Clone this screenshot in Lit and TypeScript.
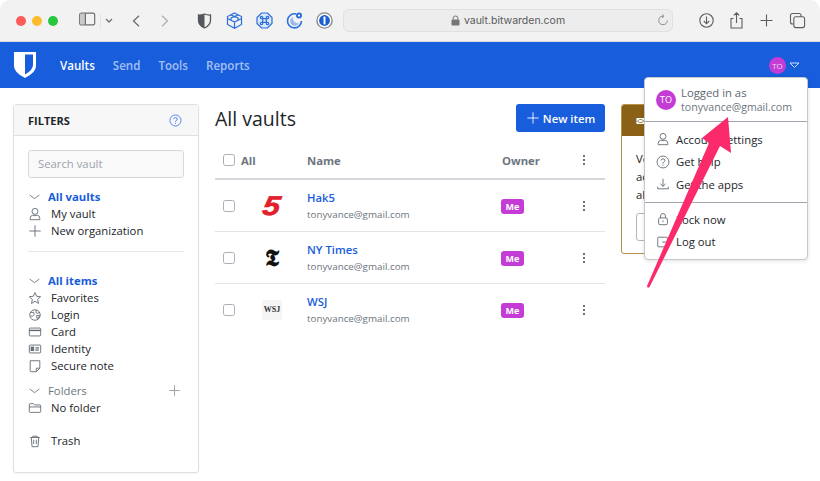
import { LitElement, html, css, svg } from "lit";
import { customElement } from "lit/decorators.js";

const ic = (body: unknown, size = 16, vb = "0 0 16 16") =>
  html`<svg class="ic" width=${size} height=${size} viewBox=${vb}>${body}</svg>`;

const icons: Record<string, unknown> = {
  chev: svg`<path d="M2 5.5 L8 10 L14 5.5"/>`,
  user: svg`<circle cx="8" cy="5" r="3.400"/><path d="M2.500 14.500 V13 Q2.500 9.800 5.500 9.300 Q8 10.600 10.500 9.300 Q13.500 9.800 13.500 13 V14.500 Z"/>`,
  plus: svg`<path d="M8 1.500 V14.500 M1.500 8 H14.500"/>`,
  star: svg`<path d="M8 1.800 L9.900 6 L14.400 6.500 L11 9.600 L12 14.200 L8 11.800 L4 14.200 L5 9.600 L1.600 6.500 L6.100 6 Z"/>`,
  globe: svg`<circle cx="8" cy="8" r="6"/><path d="M3 5 H6.500 L7 7.500 L5 9.500 L3 9 M9.500 2.500 L9 5 L11 6 L13.500 5 M10 8.500 H13 L12 12 L10 11.500 Z"/>`,
  card: svg`<rect x="1.500" y="3.500" width="13" height="9" rx="1"/><path d="M1.500 6.200 H14.500" stroke-width="1.600"/>`,
  id: svg`<rect x="1.500" y="3.500" width="13" height="9" rx="1"/><rect x="3.500" y="5.800" width="3" height="4" fill="#6d757e"/><path d="M8.500 6.500 H12.500 M8.500 8 H12.500 M8.500 9.500 H12"/>`,
  note: svg`<path d="M2.500 2 H13.500 V10.500 L9.500 14.500 H3.500 Q2.500 14.500 2.500 13.500 Z M13.500 10.500 H9.500 V14.500"/>`,
  folder: svg`<path d="M1.500 4.500 Q1.500 3 2.500 3 H6 L7.500 4.500 H13.500 Q14.500 4.500 14.500 5.500 V12 Q14.500 13 13.500 13 H2.500 Q1.500 13 1.500 12 Z M1.500 6.800 H14.500"/>`,
  trash: svg`<path d="M2.500 4 H13.500 M5.500 4 V2.500 H10.500 V4 M3.800 4 L4.600 14.500 H11.400 L12.200 4 M6.500 6.500 V11.500 M9.500 6.500 V11.500"/>`,
  help: svg`<circle cx="8" cy="8" r="6.800"/><path d="M5.800 6.300 Q6 4.400 8 4.400 Q10.200 4.400 10.200 6.200 Q10.200 7.400 8.800 8 Q8 8.400 8 9.800"/><path d="M8 11 V12.200"/>`,
  download: svg`<path d="M8 2 V10.500 M5 7.800 L8 10.700 L11 7.800 M2 11 V13.500 H14 V11"/>`,
  lock: svg`<rect x="3" y="6.800" width="10" height="7.700" rx="1.500"/><path d="M5.200 6.800 V4.500 Q5.200 1.800 8 1.800 Q10.800 1.800 10.800 4.500 V6.800 M8 9.600 V11.600"/>`,
  logout: svg`<path d="M13 5 V3.200 Q13 2.500 12.300 2.500 H2.700 Q2 2.500 2 3.200 V12.800 Q2 13.500 2.700 13.500 H12.300 Q13 13.500 13 12.800 V11 M7 8 H15 M12.500 5.800 L15 8 L12.500 10.200"/>`,
};

const tb: Record<string, unknown> = {
  shield: svg`<path d="M8.500 2 Q11.500 3.200 14.500 3 V8.500 Q14.500 13 8.500 16 Q2.500 13 2.500 8.500 V3 Q5.500 3.200 8.500 2 Z" fill="none" stroke="#55585c" stroke-width="1.300"/><path d="M8.500 2 Q5.500 3.200 2.500 3 V8.500 Q2.500 13 8.500 16 Z" fill="#55585c"/>`,
  cube: svg`<g fill="none" stroke="#2a6fdb" stroke-width="1.200"><path d="M8.500 1 L15.500 4.500 V12.500 L8.500 16.200 L1.500 12.500 V4.500 Z M1.500 6.500 L8.500 10 L15.500 6.500 M8.500 10 V16.200 M5 3 L12 6 V8.500 M12 3 L5 6 V8.500"/></g>`,
  cmd: svg`<path d="M5.500 1 H11.500 L16 5.500 V11.500 L11.500 16 H5.500 L1 11.500 V5.500 Z" fill="#dbe6f8" stroke="#2a6fdb" stroke-width="1.200"/><path d="M6.700 6.700 H10.300 V10.300 H6.700 Z M6.700 6.700 H5.500 A1.200 1.200 0 1 1 6.700 5.500 Z M10.300 6.700 V5.500 A1.200 1.200 0 1 1 11.500 6.700 Z M10.300 10.300 H11.500 A1.200 1.200 0 1 1 10.300 11.500 Z M6.700 10.300 V11.500 A1.200 1.200 0 1 1 5.500 10.300 Z" fill="none" stroke="#2a6fdb" stroke-width="1.200"/>`,
  moon: svg`<path d="M10 2 A7 7 0 1 0 15.500 9" fill="none" stroke="#2a6fdb" stroke-width="1.600"/><path d="M7 5 A4.600 4.600 0 1 0 13 11 A5 5 0 0 1 7 5 Z" fill="#9db9ec"/><circle cx="13" cy="3.600" r="3" fill="#2a6fdb"/><circle cx="13" cy="3.600" r="1.100" fill="#fff"/>`,
  one: svg`<circle cx="8.500" cy="8.500" r="7.600" fill="#fff" stroke="#8a8a8a" stroke-width="1.400"/><circle cx="8.500" cy="8.500" r="5.400" fill="#1a5fd0"/><rect x="7.500" y="4.600" width="2" height="7.800" rx=".6" fill="#fff"/>`,
  sidebar: svg`<rect x=".7" y="1.200" width="15" height="11.600" rx="1.600" fill="none" stroke="#6e6e6e" stroke-width="1.200"/><rect x="1.200" y="1.700" width="5.200" height="10.600" fill="#c9c9c9"/><path d="M6.400 1.200 V12.800" stroke="#6e6e6e" stroke-width="1.200"/>`,
  dl: svg`<circle cx="8.500" cy="8.500" r="6.700" fill="none" stroke="#5e5e5e" stroke-width="1.100"/><path d="M8.500 4.500 V11.800 M5.800 9 L8.500 11.800 L11.200 9" fill="none" stroke="#5e5e5e" stroke-width="1.100"/>`,
  share: svg`<path d="M5.500 6.500 H3 V16 H14 V6.500 H11.500 M8.500 11 V.8 M5.800 3.400 L8.500 .8 L11.200 3.400" fill="none" stroke="#5e5e5e" stroke-width="1.100"/>`,
  add: svg`<path d="M8.500 2.500 V14.500 M2.500 8.500 H14.500" fill="none" stroke="#5e5e5e" stroke-width="1.100"/>`,
  tabs: svg`<rect x="1.500" y="1.500" width="10.500" height="10.500" rx="2" fill="none" stroke="#5e5e5e" stroke-width="1.100"/><rect x="4.800" y="4.800" width="10.800" height="10.800" rx="2" fill="#f2f2f2" stroke="#5e5e5e" stroke-width="1.100"/>`,
};

const tbi = (n: string) => html`<svg width="17" height="17" viewBox="0 0 17 17">${tb[n]}</svg>`;

const dots = html`<svg class="dots" width="4" height="12" viewBox="0 0 4 12"><circle cx="2" cy="2" r="1"/><circle cx="2" cy="6" r="1"/><circle cx="2" cy="10" r="1"/></svg>`;

const row = (name: string, logo: unknown) => html`
  <div class="tr">
    <span class="cb"></span>
    <span class="logo">${logo}</span>
    <div class="nm"><a>${name}</a><small>tonyvance@gmail.com</small></div>
    <span class="own"><b class="me">Me</b></span>
    <span class="kebab">${dots}</span>
  </div>`;

@customElement("app-root")
export class AppRoot extends LitElement {
  static styles = css`
    :host { display: block; width: 820px; height: 481px; position: relative; overflow: hidden; background: #fff; font-family: "Open Sans", sans-serif; font-size: 11.300px; color: #212529; }
    .ic { fill: none; stroke: #5f6770; stroke-width: 1; display: block; flex: none; }
    .chrome { height: 41px; background: #f2f2f2; border-bottom: 1px solid #dcdcdc; display: flex; align-items: center; border-radius: 10px 10px 0 0; }
    .lights { display: flex; gap: 6px; margin-left: 16px; width: 63px; }
    .lights i { width: 10px; height: 10px; border-radius: 50%; }
    .r { background: #fc5b57; } .y { background: #fdbb2e; } .g { background: #29c73f; }
    .side { display: flex; align-items: center; width: 46px; }
    .caret { display: flex; margin-left: 4px; padding-left: 4px; border-left: 1px solid #e3e3e3; height: 14px; align-items: center; }
    .caret svg, .arrows svg { fill: none; stroke: #6e6e6e; stroke-width: 1.300; display: block; }
    .arrows { display: flex; gap: 21px; width: 57px; padding-left: 9px; margin-left: -2px; }
    .arrows svg.off { stroke: #b0b0b0; }
    .exts { display: flex; width: 155px; }
    .exts span { width: 30px; display: flex; justify-content: center; }
    .url { width: 328px; height: 21px; background: #ededed; border: 1px solid #e0e0e0; border-radius: 6px; display: flex; align-items: center; position: relative; font: 10.500px Inter, "Liberation Sans", sans-serif; color: #5a5a5a; justify-content: center; gap: 4px; margin-left: -1px; }
    .url svg { display: block; }
    .reload { position: absolute; right: 3px; top: 4px; }
    .tools { display: flex; margin-left: 18px; }
    .tools span { width: 30.300px; display: flex; justify-content: center; }
    .nav { height: 46px; background: #175ddc; display: flex; align-items: center; padding: 0 20px 0 14px; }
    .nav .links { display: flex; gap: 18px; margin-left: 24px; font-size: 11.600px; font-weight: 600; color: rgba(255,255,255,.62); }
    .nav .on { color: #fff; }
    .me-btn { margin-left: auto; display: flex; align-items: center; gap: 3px; }
    .av { background: #c43cd6; border-radius: 50%; color: #f0d6f5; display: flex; align-items: center; justify-content: center; }
    .av.s { width: 17px; height: 17px; font-size: 8px; }
    .av.l { width: 20px; height: 20px; font-size: 9px; color: #fff; }
    .main { display: flex; align-items: flex-start; padding: 16px 0 0 13px; }
    .filters { width: 184px; height: 367px; border: 1px solid #dde1e6; border-radius: 3px; flex: none; display: flex; flex-direction: column; box-shadow: 0 1px 2px rgba(0,0,0,.05); }
    .fh { height: 30px; background: #f7f7f7; border-bottom: 1px solid #dde1e6; display: flex; align-items: center; justify-content: space-between; padding: 0 16px 0 14px; font-size: 11px; font-weight: 700; flex: none; }
    .fh .ic { stroke: #4f86ea; stroke-width: 1.200; width: 13px; height: 13px; }
    .fb { padding: 14px 14px 0; display: flex; flex-direction: column; }
    .search { height: 26px; background: #f9f9f9; border: 1px solid #d5d9de; border-radius: 3px; padding-left: 9px; display: flex; align-items: center; color: #9ca3ab; margin-bottom: 10px; line-height: 24px; }
    .li { height: 17px; line-height: 17px; display: flex; align-items: center; white-space: nowrap; }
    .li .ic { margin-right: 9px; width: 14px; height: 14px; }
    .li.h .ic { margin-right: 7px; width: 13px; }
    .li.h { font-weight: 700; color: #175ddc; }
    .li.f { color: #6d757e; }
    .li.f .ic { margin-right: 7px; width: 13px; }
    .li .pl { margin: 0 3px 0 auto; display: block; }
    .li .pl .ic { stroke: #8b929a; margin: 0; width: 13px; height: 13px; }
    .fb hr { border: 0; border-top: 1px solid #e4e6e9; margin: 12px 0 20px; width: 100%; }
    .gap1 { height: 8px; flex: none; } .gap2 { height: 16px; flex: none; }
    .content { width: 390px; margin-left: 16px; flex: none; }
    .top { display: flex; justify-content: space-between; align-items: center; height: 28px; margin-bottom: 10px; }
    h1 { font-size: 19.500px; font-weight: 400; margin: 0; }
    .new { height: 28px; width: 89px; background: #175ddc; border-radius: 3px; color: #fff; font-weight: 600; display: flex; align-items: center; justify-content: center; gap: 3px; }
    .new .ic { stroke: #fff; width: 14px; height: 14px; }
    .th, .tr { display: grid; align-items: center; }
    .th { height: 36px; grid-template-columns: 92px 195px 70px 33px; border-bottom: 2px solid #d5d9de; font-weight: 700; color: #6d757e; }
    .all { display: flex; align-items: center; gap: 6px; padding-left: 8px; }
    .cb { display: block; width: 10px; height: 10px; border: 1px solid #a9b0b8; border-radius: 2.500px; margin-left: 8px; flex: none; }
    .all .cb { margin-left: 0; }
    .kebab { display: flex; justify-content: flex-end; padding-right: 19px; }
    .dots { fill: #3b4148; display: block; }
    .tr { height: 51px; border-bottom: 1px solid #e1e4e8; grid-template-columns: 40px 52px 195px 70px 33px; }
    .tr:last-child { border-bottom: 0; }
    .logo { display: flex; justify-content: center; align-items: center; margin-left: -18px; }
    .five { font: italic 900 27px/1 "Liberation Sans", sans-serif; color: #e3202b; -webkit-text-stroke: .6px #e3202b; display: block; transform: translateY(1px) scaleX(1.150) skewX(-8deg); }
    .nyt { font: 700 23px/1 "DejaVu Serif", "DejaVu Sans", serif; color: #111; }
    .wsj { width: 20px; height: 20px; background: #f5f5f5; border-radius: 2px; font: 700 8px/20px "Liberation Serif", serif; text-align: center; color: #333; }
    .nm { display: flex; flex-direction: column; gap: 1px; }
    .nm a { color: #175ddc; font-weight: 600; line-height: 17px; }
    .nm small { font-size: 9.800px; color: #6d757e; line-height: 15px; }
    .own { margin: 2px 0 0 -1px; display: flex; }
    .me { background: #c43cd6; color: #fff; font-size: 9px; font-weight: 700; border-radius: 3px; display: block; width: 23px; height: 15px; line-height: 15px; text-align: center; }
    .warn { margin-left: 16px; width: 184px; height: 150px; border: 1px solid #b8914a; border-radius: 3px; flex: none; overflow: hidden; box-sizing: border-box; }
    .warn header { height: 31px; background: #8a6116; color: #fff; display: flex; align-items: center; padding-left: 14px; font-weight: 600; }
    .warn p { margin: 14px 14px 9px; line-height: 18px; }
    .warn .send { margin-left: 14px; width: 90px; height: 28px; border: 1px solid #b0b5bb; border-radius: 3px; display: block; box-sizing: border-box; }
    .menu { position: absolute; left: 644px; top: 77px; width: 162px; height: 181px; background: #fff; border: 1px solid #c3c8ce; border-radius: 4px; box-shadow: 0 1px 4px rgba(0,0,0,.12); display: flex; flex-direction: column; }
    .who { height: 43px; display: flex; align-items: center; gap: 5px; padding-left: 11px; border-bottom: 1px solid #9fa6ad; flex: none; line-height: 14px; color: #5f6770; }
    .who small { font-size: 10.600px; color: #6d757e; display: block; }
    .sec { padding: 6px 0; display: flex; flex-direction: column; border-bottom: 1px solid #9fa6ad; }
    .sec:last-child { border: 0; padding-top: 5px; }
    .mi { height: 22.600px; display: flex; align-items: center; gap: 6px; padding-left: 11px; }
    .mi .ic { width: 14px; height: 14px; stroke: #5f6770; }
    .arrow { position: absolute; left: 0; top: 0; pointer-events: none; }
  `;

  render() {
    const i = (n: string) => ic(icons[n]);
    return html`
      <div class="chrome">
        <div class="lights"><i class="r"></i><i class="y"></i><i class="g"></i></div>
        <div class="side">${tbi("sidebar")}<span class="caret"><svg width="8" height="6" viewBox="0 0 8 6"><path d="M1 1 L4 4 L7 1"/></svg></span></div>
        <div class="arrows">
          <svg width="8" height="12" viewBox="0 0 8 12"><path d="M7 .8 L1.500 6 L7 11.200"/></svg>
          <svg class="off" width="8" height="12" viewBox="0 0 8 12"><path d="M1 .8 L6.500 6 L1 11.200"/></svg>
        </div>
        <div class="exts"><span>${tbi("shield")}</span><span>${tbi("cube")}</span><span>${tbi("cmd")}</span><span>${tbi("moon")}</span><span>${tbi("one")}</span></div>
        <div class="url">
          <svg width="9" height="11" viewBox="0 0 9 11"><rect x=".5" y="4.500" width="8" height="6" rx="1" fill="#777"/><path d="M2.200 4.500 V3 Q2.200 1 4.500 1 Q6.800 1 6.800 3 V4.500" fill="none" stroke="#777"/></svg>
          vault.bitwarden.com
          <svg class="reload" width="12" height="12" viewBox="0 0 12 12"><path d="M6 2.200 A4.200 4.200 0 1 0 10.200 6.500 M5 .5 L7 2.200 L5 4" fill="none" stroke="#8e8e8e"/></svg>
        </div>
        <div class="tools"><span>${tbi("dl")}</span><span>${tbi("share")}</span><span>${tbi("add")}</span><span>${tbi("tabs")}</span></div>
      </div>
      <div class="nav">
        <svg width="22" height="26" viewBox="0 0 22 26"><path fill-rule="evenodd" fill="#fff" d="M0 0 H22 V14 Q22 20.500 11 26 Q0 20.500 0 14 Z M11 2.500 V22.500 Q19 18 19 13 V2.500 Z"/></svg>
        <div class="links"><span class="on">Vaults</span><span>Send</span><span>Tools</span><span>Reports</span></div>
        <div class="me-btn"><span class="av s">TO</span><svg width="11" height="7" viewBox="0 0 11 7"><path d="M1 1 H10 L5.500 5.500 Z" fill="none" stroke="#cfe0fb"/></svg></div>
      </div>
      <div class="main">
        <aside class="filters">
          <div class="fh">FILTERS ${i("help")}</div>
          <div class="fb">
            <div class="search">Search vault</div>
            <div class="li h">${i("chev")}All vaults</div>
            <div class="li">${i("user")}My vault</div>
            <div class="li">${i("plus")}New organization</div>
            <hr />
            <div class="li h">${i("chev")}All items</div>
            <div class="li">${i("star")}Favorites</div>
            <div class="li">${i("globe")}Login</div>
            <div class="li">${i("card")}Card</div>
            <div class="li">${i("id")}Identity</div>
            <div class="li">${i("note")}Secure note</div>
            <div class="gap1"></div>
            <div class="li f">${i("chev")}Folders<span class="pl">${i("plus")}</span></div>
            <div class="li">${i("folder")}No folder</div>
            <div class="gap2"></div>
            <div class="li">${i("trash")}Trash</div>
          </div>
        </aside>
        <section class="content">
          <div class="top"><h1>All vaults</h1><div class="new">${i("plus")}New item</div></div>
          <div class="th">
            <span class="all"><span class="cb"></span>All</span><span>Name</span><span>Owner</span><span class="kebab">${dots}</span>
          </div>
          ${row("Hak5", html`<span class="five">5</span>`)}
          ${row("NY Times", html`<span class="nyt">𝕿</span>`)}
          ${row("WSJ", html`<span class="wsj">WSJ</span>`)}
        </section>
        <section class="warn">
          <header>✉ Verify email</header>
          <p>Verify your email<br />access to<br />all features.</p>
          <span class="send"></span>
        </section>
      </div>
      <div class="menu">
        <div class="who"><span class="av l">TO</span><div>Logged in as<small>tonyvance@gmail.com</small></div></div>
        <div class="sec">
          <div class="mi">${i("user")}Account settings</div>
          <div class="mi">${i("help")}Get help</div>
          <div class="mi">${i("download")}Get the apps</div>
        </div>
        <div class="sec">
          <div class="mi">${i("lock")}Lock now</div>
          <div class="mi">${i("logout")}Log out</div>
        </div>
      </div>
      <svg class="arrow" width="820" height="481" viewBox="0 0 820 481"><path d="M728 117 L731 153 L720 146 L649.500 287 Q647.500 289 647 286 L709 143 L702 138 Z" fill="#fb2a6a"/></svg>
    `;
  }
}
